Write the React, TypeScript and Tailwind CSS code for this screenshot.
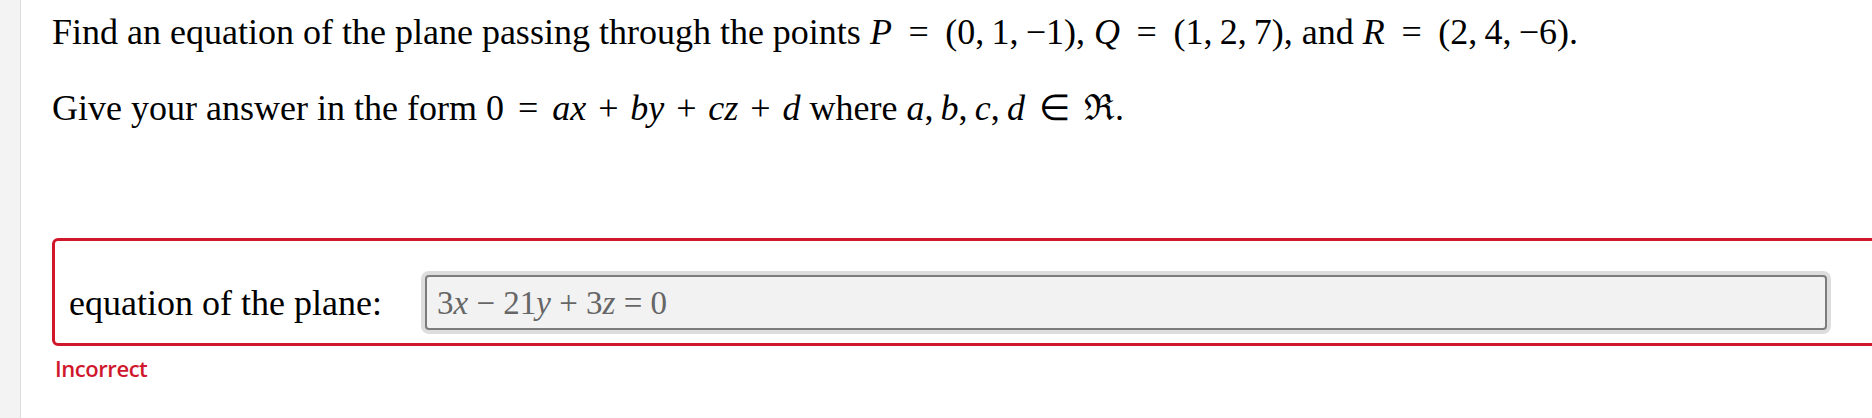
import React from 'react';

const serif = { fontFamily: '"Liberation Serif", "Times New Roman", serif' };

function I({ children }: { children: React.ReactNode }) {
  return <span className="italic">{children}</span>;
}

// relation / binary operator with TeX-like spacing
function Rel({ children, wide }: { children: React.ReactNode; wide?: boolean }) {
  return <span className={wide ? 'mx-[0.21em]' : 'mx-[0.14em]'}>{children}</span>;
}

function Bin({ children }: { children: React.ReactNode }) {
  return <span className="mx-[0.08em]">{children}</span>;
}

export default function App() {
  return (
    <div className="flex h-[418px] w-[1872px] overflow-hidden bg-white text-black">
      <div className="w-[21px] shrink-0 border-r border-[#dedede] bg-[#f3f3f3]" />

      <main className="flex-1 pl-[31px] pt-[12px]" style={serif}>
        <p className="text-[36px] leading-[40px] whitespace-nowrap">
          Find an equation of the plane passing through the points <I>P</I> <Rel wide>=</Rel> (0,{'\u2009'}1,{'\u2009'}−1),{' '}
          <I>Q</I> <Rel wide>=</Rel> (1,{'\u2009'}2,{'\u2009'}7), and <I>R</I> <Rel wide>=</Rel> (2,{'\u2009'}4,{'\u2009'}−6).
        </p>
        <p className="mt-[36px] text-[36px] leading-[40px] whitespace-nowrap">
          Give your answer in the form 0 <Rel>=</Rel> <I>ax</I> <Bin>+</Bin> <I>by</I> <Bin>+</Bin> <I>cz</I> <Bin>+</Bin> <I>d</I> where{' '}
          <I>a</I>,{'\u2009'}<I>b</I>,{'\u2009'}<I>c</I>,{'\u2009'}<I>d</I> <Rel>∈</Rel> ℜ.
        </p>

        <div className="mt-[110px] w-[1860px] rounded-[6px] border-[3px] border-[#d0172b] pb-[13px] pl-[14px] pt-[34px]">
          <div className="flex items-center">
            <span className="w-[356px] shrink-0 text-[36px] leading-[40px]">equation of the plane:</span>
            <div className="flex h-[55px] w-[1402px] items-center rounded-[4px] border-2 border-[#7c7c7c] bg-[#f2f2f2] pl-[10px] text-[33px] leading-[38px] text-[#666] shadow-[0_0_0_4px_#dddddd]">
              <span>
                3<I>x</I> − 21<I>y</I> + 3<I>z</I> = 0
              </span>
            </div>
          </div>
        </div>

        <p
          className="mt-[8px] pl-[3px] text-[22px] font-semibold leading-[28px] tracking-[-0.02em] text-[#d0172b]"
          style={{ fontFamily: '"Open Sans", "Noto Sans", sans-serif' }}
        >
          Incorrect
        </p>
      </main>
    </div>
  );
}
